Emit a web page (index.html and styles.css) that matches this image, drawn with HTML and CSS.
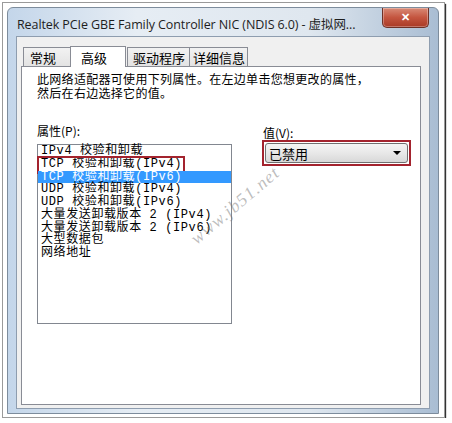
FILE: index.html
```html
<!DOCTYPE html>
<html lang="zh-CN">
<head>
    <meta charset="UTF-8">
    <title>Realtek PCIe GBE Family Controller NIC</title>
    <link rel="stylesheet" href="styles.css">
</head>
<body>
    <div class="shot">
        <div class="window">
            <div class="titlebar">
                <span class="title">Realtek PCIe GBE Family Controller NIC (NDIS 6.0) - 虚拟网...</span>
                <button class="close">&#x2715;</button>
            </div>
            <div class="client">
                <div class="tabs">
                    <div class="tab tab-general">常规</div>
                    <div class="tab active">高级</div>
                    <div class="tab">驱动程序</div>
                    <div class="tab tab-details">详细信息</div>
                </div>
                <div class="panel">
                    <p class="intro">
                        <span>此网络适配器可使用下列属性。在左边单击您想更改的属性，</span>
                        <span>然后在右边选择它的值。</span>
                    </p>
                    <div class="columns">
                        <div class="col-left">
                            <div class="label">属性(P):</div>
                            <ul class="listbox">
                                <li>IPv4 校验和卸载</li>
                                <li class="marked">TCP 校验和卸载(IPv4)</li>
                                <li class="selected">TCP 校验和卸载(IPv6)</li>
                                <li>UDP 校验和卸载(IPv4)</li>
                                <li>UDP 校验和卸载(IPv6)</li>
                                <li>大量发送卸载版本 2 (IPv4)</li>
                                <li>大量发送卸载版本 2 (IPv6)</li>
                                <li>大型数据包</li>
                                <li>网络地址</li>
                            </ul>
                        </div>
                        <div class="col-right">
                            <div class="label">值(V):</div>
                            <div class="combo-mark">
                                <div class="combo">
                                    <span>已禁用</span>
                                    <span class="arrow"></span>
                                </div>
                            </div>
                        </div>
                    </div>
                    <!-- site stamp -->
                    <span class="stamp">www.jb51.net</span>
                </div>
            </div>
        </div>
    </div>
</body>
</html>
```

FILE: styles.css
```css
/* Page */
body {
    margin: 0;
    background: #fff;
    font-family: "Noto Sans CJK SC", sans-serif;
}

/* Outer picture frame */
.shot {
    width: 443px;
    height: 416px;
    margin: 2px 0 0 2px;
    border: 1px solid #9a9a9a;
    box-shadow: 1px 2px 1px #333;
    background: #fff;
    padding: 4px 5px 3px 4px;
    box-sizing: border-box;
}

/* Aero glass window */
.window {
    height: 100%;
    border: 1px solid #7d8c9c;
    border-radius: 6px 6px 0 0;
    background: linear-gradient(90deg, #c4d6ea 0, #e6edf4 30%, #dfe7ef 70%, #a9bdd3 100%);
    padding: 0 8px 4px 8px;
    display: flex;
    flex-direction: column;
    box-sizing: border-box;
}

.titlebar {
    height: 28px;
    display: flex;
    align-items: flex-start;
    justify-content: space-between;
}

.title {
    font-family: "Open Sans", "Noto Sans CJK SC", sans-serif;
    font-size: 12.5px;
    color: #1e1e1e;
    margin-top: 6px;
    padding-left: 1px;
    letter-spacing: -0.1px;
}

.close {
    width: 47px;
    height: 20px;
    border: 1px solid #6e3127;
    border-top: none;
    border-radius: 0 0 5px 5px;
    background: linear-gradient(#d98a76, #c4553f 50%, #a93a26);
    color: #fff;
    font-size: 11px;
    font-weight: bold;
    padding: 0;
    margin-right: 1px;
    box-shadow: inset 0 0 0 1px rgba(255, 255, 255, 0.3);
}

/* Dialog body */
.client {
    flex: 1;
    background: #f0f0f0;
    border: 1px solid #8e9daf;
    padding: 8px 8px 3px 4px;
    display: flex;
    flex-direction: column;
}

.tabs {
    display: flex;
    align-items: flex-end;
    padding-left: 2px;
    height: 21px;
}

.tab {
    font-size: 13px;
    line-height: 17px;
    padding: 1px 4px 0 5px;
    border: 1px solid #898c95;
    border-bottom: none;
    background: linear-gradient(#f2f2f2, #e3e3e3);
    color: #000;
    margin-right: -1px;
}

.tab.tab-general {
    padding: 1px 15px 0 6px;
}

.tab.tab-details {
    padding: 1px 2px 0 3px;
}

.tab.active {
    background: #fff;
    line-height: 19px;
    padding: 1px 18px 0 10px;
    margin: 0 1px -1px -1px;
    position: relative;
    z-index: 1;
}

.panel {
    flex: 1;
    background: #fff;
    border: 1px solid #898c95;
    padding: 0 0 0 15px;
    position: relative;
}

.intro {
    margin: 5px 0 0;
    font-size: 12px;
    letter-spacing: 0.3px;
    color: #000;
    display: flex;
    flex-direction: column;
}

.intro span {
    height: 14px;
    line-height: 14px;
}

.columns {
    display: flex;
    margin-top: 24px;
}

.label {
    font-size: 12px;
    line-height: 14px;
    color: #000;
}

.col-left {
    width: 195px;
    flex-shrink: 0;
}

.listbox {
    list-style: none;
    margin: 6px 0 0;
    padding: 0;
    height: 178px;
    border: 1px solid #828790;
    font-family: "Liberation Mono", "Noto Sans CJK SC", monospace;
    font-size: 12px;
    letter-spacing: 0.6px;
    color: #000;
}

.listbox li {
    height: 12.75px;
    line-height: 12.75px;
    padding-left: 3px;
    white-space: nowrap;
    position: relative;
}

.listbox li.selected {
    background: #3399ff;
    color: #fff;
}

/* red annotation frame on one row */
.listbox li.marked::after {
    content: "";
    position: absolute;
    left: -1px;
    top: -2px;
    width: 144px;
    height: 14px;
    border: 2px solid #a3232e;
}

.col-right {
    margin-left: 31px;
    padding-top: 2px;
    flex-shrink: 0;
}

.combo-mark {
    margin-top: 0;
    margin-left: -1px;
    border: 2px solid #a3232e;
    padding: 1px;
    width: 143px;
}

.combo {
    height: 18px;
    border: 1px solid #707070;
    border-radius: 3px;
    background: linear-gradient(#f4f4f4, #e8e8e8 50%, #d8d8d8);
    display: flex;
    align-items: center;
    justify-content: space-between;
    padding: 0 6px 0 3px;
    font-size: 13px;
}

.arrow {
    width: 0;
    height: 0;
    border-left: 4px solid transparent;
    border-right: 4px solid transparent;
    border-top: 4px solid #000;
}

.stamp {
    position: absolute;
    left: 178px;
    top: 161px;
    font-family: "Liberation Serif", serif;
    font-style: italic;
    font-size: 18px;
    color: rgba(110, 110, 110, 0.45);
    transform: rotate(-40deg);
    transform-origin: left bottom;
    letter-spacing: 1px;
}
```
